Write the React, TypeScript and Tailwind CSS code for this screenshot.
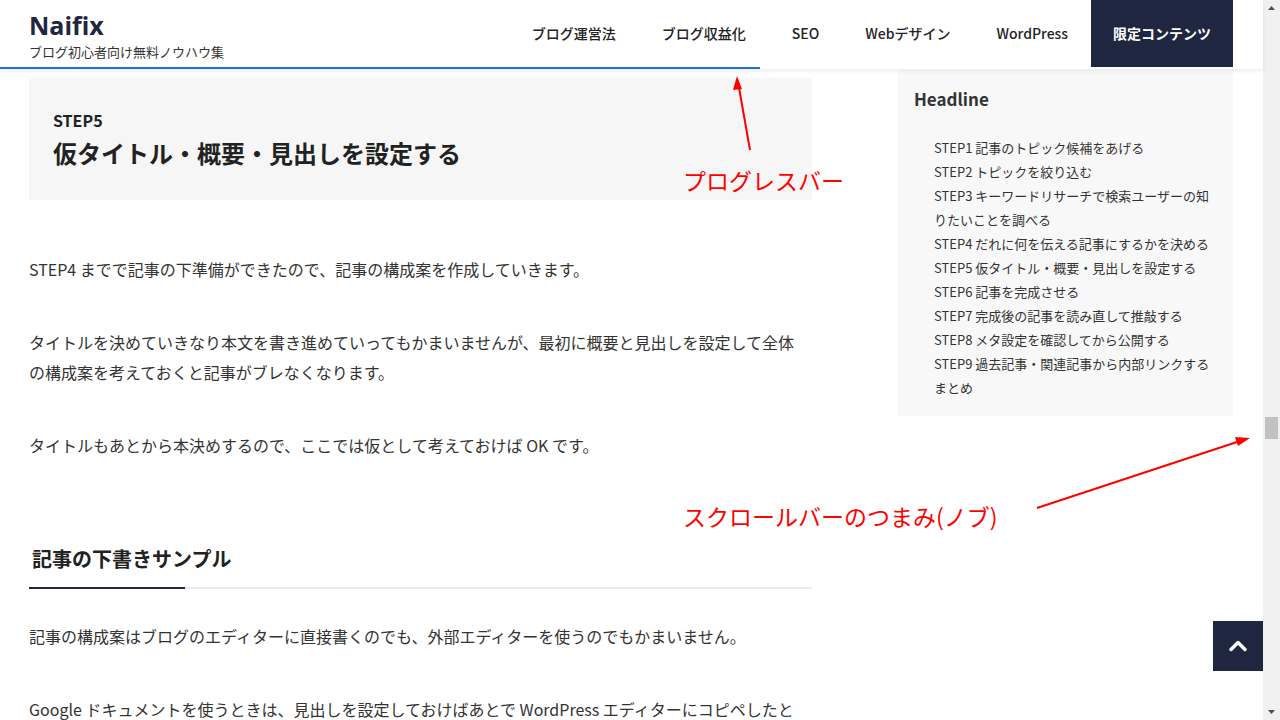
import { ChevronUp } from "lucide-react";

const toc = [
  "STEP1 記事のトピック候補をあげる",
  "STEP2 トピックを絞り込む",
  "STEP3 キーワードリサーチで検索ユーザーの知りたいことを調べる",
  "STEP4 だれに何を伝える記事にするかを決める",
  "STEP5 仮タイトル・概要・見出しを設定する",
  "STEP6 記事を完成させる",
  "STEP7 完成後の記事を読み直して推敲する",
  "STEP8 メタ設定を確認してから公開する",
  "STEP9 過去記事・関連記事から内部リンクする",
  "まとめ",
];

const nav = ["ブログ運営法", "ブログ収益化", "SEO", "Webデザイン", "WordPress"];

function Header() {
  return (
    <div className="relative z-10 bg-white shadow-[0_2px_4px_rgba(0,0,0,0.07)]">
      <div className="flex h-[67px] items-stretch justify-between pl-[29px] pr-[30px]">
        <div className="flex flex-col pt-[9px]">
          <span className="text-[25px] font-bold leading-[32px] text-[#1e2640] font-['Open_Sans','Noto_Sans_CJK_JP',sans-serif]">
            Naifix
          </span>
          <span className="mt-[1px] text-[13px] leading-[20px] text-[#333]">
            ブログ初心者向け無料ノウハウ集
          </span>
        </div>
        <nav className="flex items-stretch">
          {nav.map((n) => (
            <a key={n} className="flex items-center px-[23px] text-[14px] font-medium text-[#222]">
              {n}
            </a>
          ))}
          <a className="flex items-center bg-[#1e2640] px-[22px] text-[14px] font-bold text-white">
            限定コンテンツ
          </a>
        </nav>
      </div>
      <div className="h-[2px] w-[760px] bg-[#1f6fdb]" />
    </div>
  );
}

function Scrollbar() {
  return (
    <div className="flex h-[720px] w-[17px] flex-col items-center justify-between bg-[#f0f0f0]">
      <svg width="9" height="17" viewBox="0 0 9 17">
        <path d="M1 10 L4.5 6 L8 10 Z" fill="#505050" />
      </svg>
      <svg width="9" height="17" viewBox="0 0 9 17">
        <path d="M1 7 L4.5 11 L8 7 Z" fill="#505050" />
      </svg>
    </div>
  );
}

export default function App() {
  return (
    <div className="relative flex h-[720px] w-[1280px] overflow-hidden bg-white text-[#333] font-['Noto_Sans_CJK_JP','Noto_Sans',sans-serif]">
      <div className="flex w-[1263px] flex-col">
        <Header />
        <div className="mt-[1px] flex gap-[86px] pl-[29px] pr-[30px]">
          <article className="w-[783px] pt-[8px]">
            <div className="bg-[#f6f6f6] px-6 pt-[30px] pb-[29px]">
              <div className="text-[16px] font-bold leading-[24px] text-[#222]">STEP5</div>
              <h2 className="mt-[3px] text-[24px] font-bold leading-[36px] text-[#222]">
                仮タイトル・概要・見出しを設定する
              </h2>
            </div>
            <p className="mt-[54px] w-[776px] text-[16px] leading-[30px]">
              STEP4 までで記事の下準備ができたので、記事の構成案を作成していきます。
            </p>
            <p className="mt-[43px] w-[776px] text-[16px] leading-[30px]">
              タイトルを決めていきなり本文を書き進めていってもかまいませんが、最初に概要と見出しを設定して全体の構成案を考えておくと記事がブレなくなります。
            </p>
            <p className="mt-[43px] w-[776px] text-[16px] leading-[30px]">
              タイトルもあとから本決めするので、ここでは仮として考えておけば OK です。
            </p>
            <h3 className="relative mt-[84px] border-b-2 border-[#ebebeb] pb-[13px] pl-[3px] text-[20px] font-bold leading-[30px] text-[#222]">
              記事の下書きサンプル
              <span className="absolute -bottom-[2px] left-0 h-[2px] w-[156px] bg-[#1e2640]" />
            </h3>
            <p className="mt-[32px] w-[776px] text-[16px] leading-[30px]">
              記事の構成案はブログのエディターに直接書くのでも、外部エディターを使うのでもかまいません。
            </p>
            <p className="mt-[43px] w-[776px] text-[16px] leading-[30px]">
              Google ドキュメントを使うときは、見出しを設定しておけばあとで WordPress エディターにコピペしたときにそのまま見出しとして反映されます。
            </p>
          </article>
          <aside className="w-[335px] self-start bg-[#f8f8f8] px-4 pt-[17px] pb-[16px]">
            <div className="text-[17px] font-bold leading-[24px] text-[#333]">Headline</div>
            <ul className="mt-[25px] pl-5">
              {toc.map((t) => (
                <li key={t} className="text-[13px] leading-[24px] text-[#333]">
                  {t}
                </li>
              ))}
            </ul>
          </aside>
        </div>
      </div>
      <Scrollbar />

      {/* scrollbar thumb */}
      <div className="absolute left-[1265px] top-[417px] h-[22px] w-[13px] bg-[#c1c1c1]" />

      {/* back to top */}
      <button className="absolute left-[1213px] top-[621px] flex h-[50px] w-[50px] items-center justify-center bg-[#1e2640]">
        <ChevronUp className="h-7 w-7 text-white" strokeWidth={3} />
      </button>

      {/* annotations */}
      <svg className="pointer-events-none absolute left-0 top-0" width="1280" height="720">
        <line x1="750" y1="150" x2="738" y2="82" stroke="#ff0000" strokeWidth="2" />
        <path d="M737 76 L733 90 L742 89 Z" fill="#ff0000" />
        <line x1="1037" y1="508" x2="1240" y2="441" stroke="#ff0000" strokeWidth="2" />
        <path d="M1250 438 L1235 437 L1238 446 Z" fill="#ff0000" />
      </svg>
      <span className="pointer-events-none absolute left-[683px] top-[164px] text-[23px] leading-[32px] text-[#ff0000]">
        プログレスバー
      </span>
      <span className="pointer-events-none absolute left-[683px] top-[500px] text-[23px] leading-[32px] text-[#ff0000]">
        スクロールバーのつまみ(ノブ)
      </span>
    </div>
  );
}
